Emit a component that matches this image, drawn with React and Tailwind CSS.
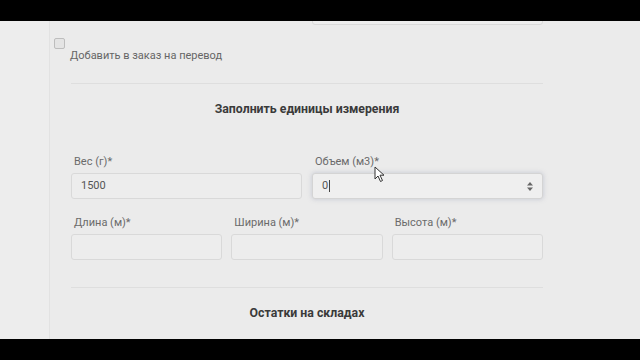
export default function App() {
  return (
    <div className="w-[640px] h-[360px] bg-black flex flex-col overflow-hidden" style={{ fontFamily: "Roboto, 'Liberation Sans', sans-serif" }}>
      <div className="h-[21px] shrink-0" />
      <div className="flex flex-1 bg-[#ebebeb] relative overflow-hidden">
        {/* left strip */}
        <div className="w-[50px] shrink-0 bg-[#ededed] border-r border-[#e2e2e2]" />
        <div className="flex-1 relative">
          {/* input from above, cut off */}
          <div className="absolute left-[262px] top-[-20px] w-[231px] h-[24px] border border-[#dadada] rounded-[3px] bg-[#eeeeee]" />

          <div className="pt-[17px] pl-[4px]">
            <div className="w-[11px] h-[11px] border border-[#bdbdbd] rounded-[2px] bg-[#e4e4e4]" />
            <p className="text-[11px] text-[#666] pl-[16px] leading-[14px]">Добавить в заказ на перевод</p>
          </div>

          <div className="ml-[21px] w-[472px]">
            <div className="mt-[20px] border-t border-[#dedede]" />
            <h2 className="text-center text-[12.3px] font-bold text-[#3a3a3a] mt-[17px] leading-[16px]">Заполнить единицы измерения</h2>

            <div className="grid grid-cols-2 gap-x-[10px] mt-[38px]">
              <div>
                <label className="block text-[11px] text-[#6a6a6a] pl-[3px] leading-[14px]">Вес (г)*</label>
                <div className="mt-[4px] h-[26px] border border-[#d9d9d9] rounded-[3px] bg-[#ededed] flex items-center px-[9px] text-[11px] text-[#555]">1500</div>
              </div>
              <div>
                <label className="block text-[11px] text-[#6a6a6a] pl-[3px] leading-[14px]">Объем (м3)*</label>
                <div className="mt-[4px] h-[26px] border border-[#d4d4d4] rounded-[3px] bg-[#efefef] shadow-[0_0_5px_rgba(120,130,160,0.35)] flex items-center px-[9px] text-[11px] text-[#555]">
                  <span>0</span>
                  <span className="w-px h-[12px] bg-[#444] ml-[1px]" />
                  <span className="ml-auto flex flex-col items-center leading-none">
                    <svg width="6" height="9" viewBox="0 0 6 9">
                      <path d="M3 0 L6 3.5 H0 Z" fill="#666" />
                      <path d="M3 9 L6 5.5 H0 Z" fill="#666" />
                    </svg>
                  </span>
                </div>
              </div>
            </div>

            <div className="grid grid-cols-3 gap-x-[9px] mt-[17px]">
              {["Длина (м)*", "Ширина (м)*", "Высота (м)*"].map((l) => (
                <div key={l}>
                  <label className="block text-[11px] text-[#6a6a6a] pl-[3px] leading-[14px]">{l}</label>
                  <div className="mt-[4px] h-[26px] border border-[#d9d9d9] rounded-[3px] bg-[#ededed]" />
                </div>
              ))}
            </div>

            <div className="mt-[27px] border-t border-[#dedede]" />
            <h2 className="text-center text-[12.3px] font-bold text-[#3a3a3a] mt-[17px] leading-[16px]">Остатки на складах</h2>
          </div>

          {/* mouse cursor */}
          <svg className="absolute left-[324px] top-[145px]" width="11" height="17" viewBox="0 0 11 17">
            <path d="M1 1 L1 13 L4 10 L6.5 15.5 L8.5 14.5 L6 9.2 L10 9.2 Z" fill="#fff" stroke="#333" strokeWidth="1" strokeLinejoin="round" />
          </svg>
        </div>
      </div>
      <div className="h-[21px] shrink-0" />
    </div>
  );
}
